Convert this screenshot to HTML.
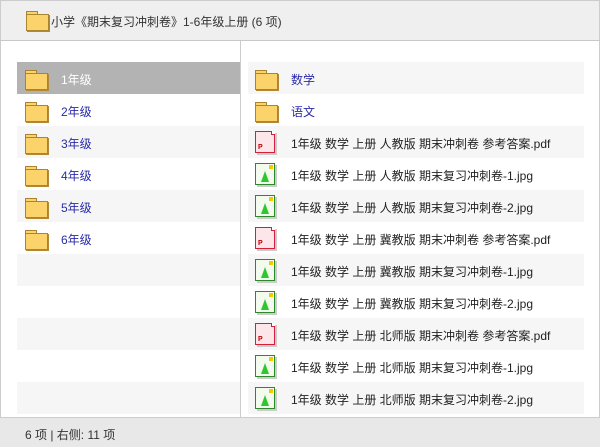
<!DOCTYPE html><html><head><meta charset="utf-8"><style>
*{margin:0;padding:0;box-sizing:border-box}
body{width:600px;height:447px;background:#fff;font-family:"Liberation Sans","Noto Sans CJK SC",sans-serif;font-size:12px;position:relative;overflow:hidden;color:#222}
.hdr{position:absolute;left:0;top:0;width:600px;height:41px;background:#efefef;border:1px solid #ccc;border-bottom:1px solid #c8c8c8}
.hdr .t{position:absolute;left:50px;top:12px;color:#333}
.fold{position:absolute;width:22px;height:19px}
.fold:before{content:"";position:absolute;left:0;top:0;width:10px;height:4px;background:#fcd36a;border:1px solid #a88530;border-bottom:none}
.fold:after{content:"";position:absolute;left:0;top:3px;width:21px;height:15px;background:#fcd36a;border:1px solid #a88530;box-shadow:1px 1px 0 #b08a3a}
.row{position:absolute;height:32px}
.g{background:#f6f6f6}
.sel{background:#b3b3b3}
.lt{position:absolute;left:44px;top:9px;color:#2b2ba5}
.rt{position:absolute;left:43px;top:9px;color:#222}
.vd{position:absolute;left:240px;top:41px;width:1px;height:376px;background:#ccc}
.foot{position:absolute;left:0;top:417px;width:600px;height:30px;background:#e8e8e8;border-top:1px solid #ccc}
.foot span{position:absolute;left:25px;top:8px;color:#333}
.ic{position:absolute;left:7px;top:5px;width:20px;height:22px;border:1px solid;box-shadow:2px 2px 0 #ccc}
.pdf{border-color:#d0203a;background:#fde6ea}
.pdf b{position:absolute;left:2px;bottom:1px;color:#b00;font-size:7px;font-weight:bold}
.jpg{border-color:#2a8a2a;background:#f2fbee}
.jpg i{position:absolute;left:5px;bottom:2px;width:0;height:0;border-left:4px solid transparent;border-right:4px solid transparent;border-bottom:11px solid #2ec82e}
.jpg u{position:absolute;right:1px;top:1px;width:4px;height:4px;background:#f5c800}
.lb{position:absolute;right:-1px;top:-1px;width:4px;height:4px;border-left:1px solid;border-bottom:1px solid;background:#fff}
</style></head><body>
<div class="hdr"><div class="fold" style="left:25px;top:10px"></div><span class="t">小学《期末复习冲刺卷》1-6年级上册 (6 项)</span></div>
<div class="row sel" style="left:17px;top:62px;width:223px"><div class="fold" style="left:8px;top:8px"></div><span class="lt" style="color:#fff">1年级</span></div>
<div class="row" style="left:17px;top:94px;width:223px"><div class="fold" style="left:8px;top:8px"></div><span class="lt">2年级</span></div>
<div class="row g" style="left:17px;top:126px;width:223px"><div class="fold" style="left:8px;top:8px"></div><span class="lt">3年级</span></div>
<div class="row" style="left:17px;top:158px;width:223px"><div class="fold" style="left:8px;top:8px"></div><span class="lt">4年级</span></div>
<div class="row g" style="left:17px;top:190px;width:223px"><div class="fold" style="left:8px;top:8px"></div><span class="lt">5年级</span></div>
<div class="row" style="left:17px;top:222px;width:223px"><div class="fold" style="left:8px;top:8px"></div><span class="lt">6年级</span></div>
<div class="row g" style="left:17px;top:254px;width:223px"></div>
<div class="row g" style="left:17px;top:318px;width:223px"></div>
<div class="row g" style="left:17px;top:382px;width:223px"></div>
<div class="vd"></div>

<div class="row g" style="left:248px;top:62px;width:336px"><div class="fold" style="left:7px;top:8px"></div><span class="rt" style="color:#2b2ba5">数学</span></div>
<div class="row" style="left:248px;top:94px;width:336px"><div class="fold" style="left:7px;top:8px"></div><span class="rt" style="color:#2b2ba5">语文</span></div>
<div class="row g" style="left:248px;top:126px;width:336px"><div class="ic pdf"><span class="lb" style="border-color:#d0203a"></span><b>P</b></div><span class="rt">1年级 数学 上册 人教版 期末冲刺卷 参考答案.pdf</span></div>
<div class="row" style="left:248px;top:158px;width:336px"><div class="ic jpg"><i></i><u></u></div><span class="rt">1年级 数学 上册 人教版 期末复习冲刺卷-1.jpg</span></div>
<div class="row g" style="left:248px;top:190px;width:336px"><div class="ic jpg"><i></i><u></u></div><span class="rt">1年级 数学 上册 人教版 期末复习冲刺卷-2.jpg</span></div>
<div class="row" style="left:248px;top:222px;width:336px"><div class="ic pdf"><span class="lb" style="border-color:#d0203a"></span><b>P</b></div><span class="rt">1年级 数学 上册 冀教版 期末冲刺卷 参考答案.pdf</span></div>
<div class="row g" style="left:248px;top:254px;width:336px"><div class="ic jpg"><i></i><u></u></div><span class="rt">1年级 数学 上册 冀教版 期末复习冲刺卷-1.jpg</span></div>
<div class="row" style="left:248px;top:286px;width:336px"><div class="ic jpg"><i></i><u></u></div><span class="rt">1年级 数学 上册 冀教版 期末复习冲刺卷-2.jpg</span></div>
<div class="row g" style="left:248px;top:318px;width:336px"><div class="ic pdf"><span class="lb" style="border-color:#d0203a"></span><b>P</b></div><span class="rt">1年级 数学 上册 北师版 期末冲刺卷 参考答案.pdf</span></div>
<div class="row" style="left:248px;top:350px;width:336px"><div class="ic jpg"><i></i><u></u></div><span class="rt">1年级 数学 上册 北师版 期末复习冲刺卷-1.jpg</span></div>
<div class="row g" style="left:248px;top:382px;width:336px"><div class="ic jpg"><i></i><u></u></div><span class="rt">1年级 数学 上册 北师版 期末复习冲刺卷-2.jpg</span></div>
<div style="position:absolute;left:0;top:41px;width:1px;height:376px;background:#ccc"></div>
<div style="position:absolute;right:0;top:41px;width:1px;height:376px;background:#ccc"></div>
<div class="foot"><span>6 项 | 右侧: 11 项</span></div>
</body></html>
